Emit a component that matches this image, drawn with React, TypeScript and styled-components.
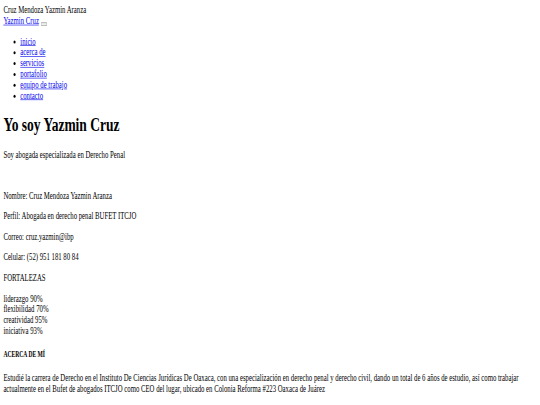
import React from "react";
import styled, { createGlobalStyle } from "styled-components";

// the reference is a 1280x672 page shrunk into 540x405, so the page is laid
// out at its own size and the whole sheet is scaled down
const PAGE_W = 1280;
const SX = 540 / PAGE_W;
const SY = 0.603;

const GlobalStyle = createGlobalStyle`
  html, body {
    margin: 0;
    padding: 0;
    background: #ffffff;
    overflow: hidden;
  }
`;

const Sheet = styled.div`
  width: ${PAGE_W}px;
  padding: 8px;
  box-sizing: border-box;
  transform: scale(${SX}, ${SY});
  transform-origin: 0 0;
  font-family: "Liberation Serif", "Times New Roman", serif;
  font-size: 16px;
  color: #000000;

  a {
    color: #0000ee;
    text-decoration: underline;
  }
`;

const Brand = styled.div``;

const NavBar = styled.nav``;

const Toggler = styled.button``;

const Menu = styled.ul`
  margin: 16px 0;
  padding-left: 40px;
  list-style: disc;
`;

const Title = styled.h1`
  font-size: 2em;
  font-weight: bold;
  margin: 0.67em 0;
`;

const Text = styled.p`
  margin: 16px 0;
`;

const SectionTitle = styled.h5`
  font-size: 0.83em;
  font-weight: bold;
  margin: 1.67em 0;
`;

const links = [
  "inicio",
  "acerca de",
  "servicios",
  "portafolio",
  "equipo de trabajo",
  "contacto",
];

const strengths = [
  { name: "liderazgo", value: 90 },
  { name: "flexibilidad", value: 70 },
  { name: "creatividad", value: 95 },
  { name: "iniciativa", value: 93 },
];

export default function App() {
  return (
    <>
      <GlobalStyle />
      <Sheet>
        <Brand>Cruz Mendoza Yazmin Aranza</Brand>
        <NavBar>
          <a href="#">Yazmin Cruz</a> <Toggler type="button" />
          <Menu>
            {links.map((l) => (
              <li key={l}>
                <a href="#">{l}</a>
              </li>
            ))}
          </Menu>
        </NavBar>

        <Title>Yo soy Yazmin Cruz</Title>
        <Text>Soy abogada especializada en Derecho Penal</Text>
        <Text>&nbsp;</Text>

        <Text>Nombre: Cruz Mendoza Yazmin Aranza</Text>
        <Text>Perfil: Abogada en derecho penal BUFET ITCJO</Text>
        <Text>Correo: cruz.yazmin@ibp</Text>
        <Text>Celular: (52) 951 181 80 84</Text>
        <Text>FORTALEZAS</Text>
        <Text>
          {strengths.map((s) => (
            <React.Fragment key={s.name}>
              {s.name} {s.value}%
              <br />
            </React.Fragment>
          ))}
        </Text>

        <SectionTitle>ACERCA DE MÍ</SectionTitle>
        <Text>
          Estudié la carrera de Derecho en el Instituto De Ciencias Jurídicas De
          Oaxaca, con una especialización en derecho penal y derecho civil,
          dando un total de 6 años de estudio, así como trabajar actualmente en
          el Bufet de abogados ITCJO como CEO del lugar, ubicado en Colonia
          Reforma #223 Oaxaca de Juárez
        </Text>
        <Text>
          Me he dedicado a brindar asesoría legal a personas y empresas en
          materia penal, acompañando a mis clientes en cada etapa del proceso y
          buscando siempre la mejor solución para cada uno de sus casos.
        </Text>
      </Sheet>
    </>
  );
}
